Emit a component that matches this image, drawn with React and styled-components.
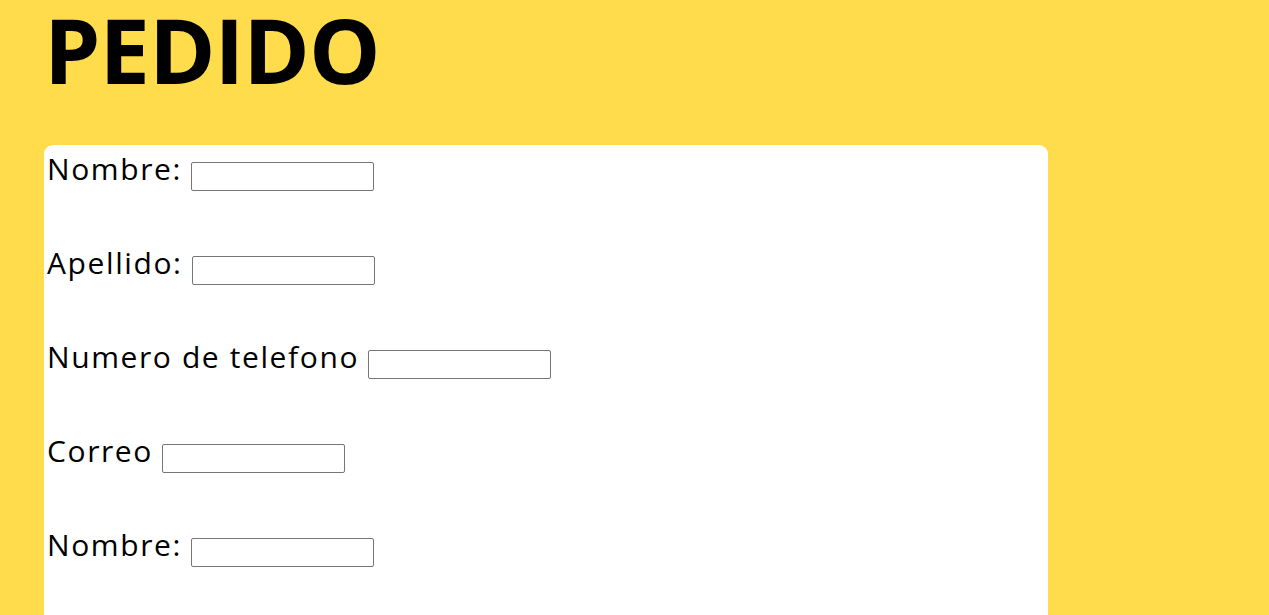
import React from 'react';
import styled, { createGlobalStyle } from 'styled-components';

const GlobalStyle = createGlobalStyle`
  html, body {
    margin: 0;
    padding: 0;
    background-color: #FFDC4B;
    overflow: hidden;
  }
`;

const Page = styled.main`
  padding: 0 44px;
  height: 615px;
  font-family: "Open Sans", "Liberation Sans", sans-serif;
  color: #000000;
`;

const Title = styled.h1`
  margin: 0;
  height: 145px;
  box-sizing: border-box;
  font-size: 90px;
  font-weight: 700;
  line-height: 1.1;
  letter-spacing: -1px;
  white-space: nowrap;
`;

const Card = styled.form`
  display: flex;
  flex-direction: column;
  gap: 65px;
  width: 1004px;
  min-height: 600px;
  padding: 9px 3px;
  box-sizing: border-box;
  background-color: #ffffff;
  border-radius: 9px;
`;

const Row = styled.label`
  display: flex;
  align-items: flex-end;
  gap: 9px;
  font-size: 30px;
  line-height: 29px;
  letter-spacing: 1.6px;
`;

const Input = styled.input`
  width: 183px;
  height: 29px;
  box-sizing: border-box;
  margin-bottom: -8px;
  border: 1px solid #767676;
  border-radius: 2px;
  background: #ffffff;
`;

const fields = ['Nombre:', 'Apellido:', 'Numero de telefono', 'Correo', 'Nombre:'];

export default function App() {
  return (
    <Page>
      <GlobalStyle />
      <Title>PEDIDO</Title>
      <Card>
        {fields.map((f, i) => (
          <Row key={i}>
            {f}
            <Input type="text" />
          </Row>
        ))}
      </Card>
    </Page>
  );
}
